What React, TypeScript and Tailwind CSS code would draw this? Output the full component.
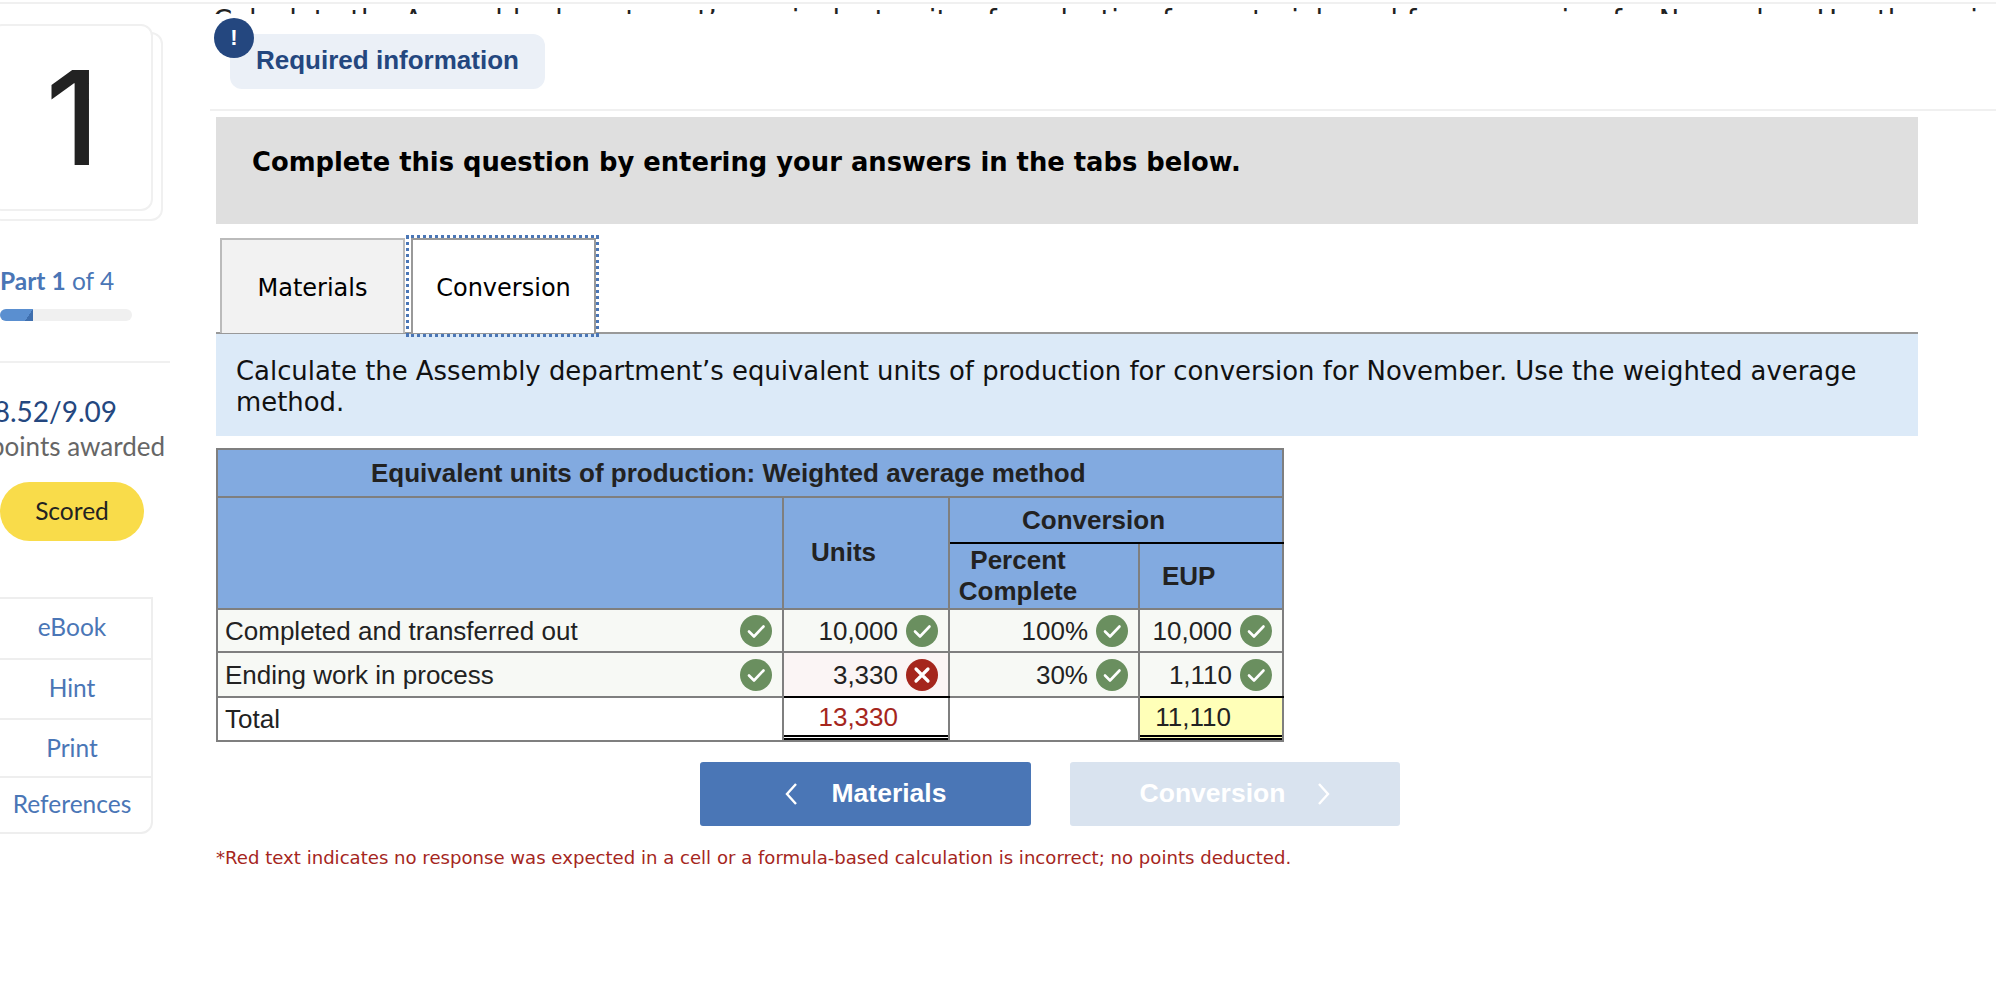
const dejavu = "font-['DejaVu_Sans',sans-serif]";
const lato = "font-['Lato',sans-serif]";

function Check() {
  return (
    <svg viewBox="0 0 32 32" className="h-8 w-8 shrink-0">
      <circle cx="16" cy="16" r="16" fill="#6a8f5f" />
      <path d="M9 16.5l5 5 9.5-10" fill="none" stroke="#fff" strokeWidth="2.6" strokeLinecap="round" strokeLinejoin="round" />
    </svg>
  );
}

function Cross() {
  return (
    <svg viewBox="0 0 32 32" className="h-8 w-8 shrink-0">
      <circle cx="16" cy="16" r="16" fill="#a5261d" />
      <path d="M10 10l12 12M22 10L10 22" fill="none" stroke="#fff" strokeWidth="3.2" strokeLinecap="round" />
    </svg>
  );
}

function Sidebar() {
  const links = [
    { label: 'eBook', height: 'h-[59px] pb-[2px]' },
    { label: 'Hint', height: 'h-[60px] pb-[2px]' },
    { label: 'Print', height: 'h-[58px]' },
    { label: 'References', height: 'h-[56px] pb-[2px]' },
  ];

  return (
    <aside className={`w-[210px] shrink-0 ${lato}`}>
      <div className="relative mt-5 -ml-[10px] h-[197px] w-[173px]">
        <div className="absolute inset-x-0 top-2 bottom-0 rounded-xl border-2 border-[#f0f0f0]" />
        <div className="relative flex h-[187px] w-[163px] items-center justify-center rounded-xl border-2 border-[#f0f0f0] bg-white pl-[2px]">
          <span className="font-['Inter',sans-serif] text-[130px] leading-none font-medium text-[#222]">1</span>
        </div>
      </div>
      <p className="mt-[46px] text-[24.5px] leading-7 text-[#4a76b6]">
        <b>Part 1</b> of 4
      </p>
      <div className="mt-[14px] h-3 w-[132px] rounded-full bg-[#f0f0f0]">
        <div className="flex h-full w-[33px] justify-end rounded-l-full bg-[#5a8fd0]">
          <div className="h-full w-2 bg-[linear-gradient(to_bottom_right,transparent_50%,#3f6fae_50%)]" />
        </div>
      </div>
      <div className="mt-10 h-[2px] w-[170px] bg-[#f0f0f0]" />
      <div className="mt-[31px] flex w-[117px] justify-end whitespace-nowrap text-[28px] leading-[34px] text-[#24477f]">
        8.52/9.09
      </div>
      <div className="mt-[3px] flex w-[165px] justify-end whitespace-nowrap text-[26px] leading-[30px] text-[#666]">
        points awarded
      </div>
      <div className="mt-[21px] flex h-[59px] w-36 items-center justify-center rounded-full bg-[#f9dc4a] text-[24.5px] text-[#222]">
        Scored
      </div>
      <div className="mt-14 -ml-1 w-[157px] rounded-br-xl border-2 border-[#eeeeee]">
        {links.map((link, idx) => (
          <div
            key={link.label}
            className={`flex ${link.height} items-center justify-center pr-[5px] text-[24.5px] text-[#4a76b6] ${idx > 0 ? 'border-t-2 border-[#eeeeee]' : ''}`}
          >
            {link.label}
          </div>
        ))}
      </div>
    </aside>
  );
}

function AnswerTable() {
  const head = 'bg-[#82aae0] border-2 border-[#7f7f7f] font-bold text-[#222] p-0';
  const cell = 'border-2 border-[#7f7f7f] p-0';
  const soft = 'bg-[#f7f9f5]';
  const value = 'flex items-center justify-end gap-2 pr-[10px] h-full';

  return (
    <table className="mt-3 w-[1066px] table-fixed border-collapse font-['Liberation_Sans',sans-serif] text-[26px] leading-[32px] text-[#222]">
      <colgroup>
        <col className="w-[566px]" />
        <col className="w-[166px]" />
        <col className="w-[190px]" />
        <col className="w-[144px]" />
      </colgroup>
      <tbody>
        <tr className="h-[48px]">
          <td colSpan={4} className={`${head} text-left pl-[153px]`}>
            Equivalent units of production: Weighted average method
          </td>
        </tr>
        <tr className="h-[46px]">
          <td rowSpan={2} className={head} />
          <td rowSpan={2} className={`${head} pb-[2px] pl-[27px] text-left`}>
            Units
          </td>
          <td colSpan={2} className={`${head} border-b-black pl-[72px] text-left`}>
            Conversion
          </td>
        </tr>
        <tr className="h-[66px]">
          <td className={`${head} border-t-black pr-[52px] text-center leading-[31px]`}>
            Percent
            <br />
            Complete
          </td>
          <td className={`${head} border-t-black pl-[22px] text-left`}>EUP</td>
        </tr>
        <tr className="h-[43px]">
          <td className={`${cell} ${soft}`}>
            <div className="flex h-full items-center justify-between pr-[10px] pl-[7px]">
              Completed and transferred out
              <Check />
            </div>
          </td>
          <td className={`${cell} ${soft}`}>
            <div className={value}>
              10,000
              <Check />
            </div>
          </td>
          <td className={`${cell} ${soft}`}>
            <div className={value}>
              100%
              <Check />
            </div>
          </td>
          <td className={`${cell} ${soft}`}>
            <div className={value}>
              10,000
              <Check />
            </div>
          </td>
        </tr>
        <tr className="h-[45px]">
          <td className={`${cell} ${soft}`}>
            <div className="flex h-full items-center justify-between pr-[10px] pl-[7px]">
              Ending work in process
              <Check />
            </div>
          </td>
          <td className={`${cell} border-b-black bg-[#fbf5f5]`}>
            <div className={value}>
              3,330
              <Cross />
            </div>
          </td>
          <td className={`${cell} ${soft}`}>
            <div className={value}>
              30%
              <Check />
            </div>
          </td>
          <td className={`${cell} border-b-black ${soft}`}>
            <div className={value}>
              1,110
              <Check />
            </div>
          </td>
        </tr>
        <tr className="h-[43px]">
          <td className={`${cell} pl-[7px]`}>Total</td>
          <td className={cell}>
            <div className="flex h-[42px] items-center justify-end border-b-[5px] border-double border-black pr-[50px] text-[#a5261d]">
              13,330
            </div>
          </td>
          <td className={cell} />
          <td className={`${cell} bg-[#ffffb8]`}>
            <div className="flex h-[42px] items-center justify-end border-b-[5px] border-double border-black pr-[51px]">
              11,110
            </div>
          </td>
        </tr>
      </tbody>
    </table>
  );
}

function App() {
  return (
    <div className="h-[1000px] w-[1996px] overflow-hidden bg-white">
      <div className="mt-[2px] h-[2px] w-full bg-[#f0f0f0]" />
      <div className="flex">
        <Sidebar />
        <main className="w-[1786px]">
          <div className={`h-[10px] overflow-hidden pt-px pl-[3px] text-[27.5px] leading-[30px] whitespace-nowrap text-[#222] ${dejavu}`}>
            Calculate the Assembly department’s equivalent units of production for materials and for conversion for November. Use the weighted
          </div>
          <div className="relative mt-5 ml-5 flex h-[55px] w-[315px] items-center rounded-xl bg-[#ebf0f7] pb-[2px] pl-[26px] font-['Liberation_Sans',sans-serif] text-[26px] font-bold text-[#24477f]">
            <div className="absolute -top-4 -left-4 flex h-10 w-10 items-center justify-center rounded-full bg-[#24477f] text-[22px] leading-none text-white">
              !
            </div>
            Required information
          </div>
          <div className="mt-5 h-[2px] bg-[#f0f0f0]" />
          <div className={`ml-[6px] w-[1702px] ${dejavu}`}>
            <div className="mt-[6px] h-[107px] bg-[#dfdfdf] pt-[27px] pl-9 text-[25.8px] leading-9 font-bold text-black">
              Complete this question by entering your answers in the tabs below.
            </div>
            <div className="mt-[14px] flex h-24 gap-[6px] border-b-2 border-[#999] pl-1 text-2xl text-black">
              <div className="flex h-[95px] w-[185px] items-center justify-center border-x-2 border-t-2 border-[#bbb] bg-[#f2f2f2] pt-[2px]">
                Materials
              </div>
              <div className="relative z-10 flex h-[95px] w-[185px] items-center justify-center border-x-2 border-t-2 border-[#999] bg-white pt-[2px]">
                Conversion
                <div className="absolute -top-[5px] -right-[5px] -bottom-[4px] -left-[7px] border-3 border-dotted border-[#4a76b6]" />
              </div>
            </div>
            <div className="h-[102px] bg-[#dceaf8] px-5 pt-[22px] text-[25.9px] leading-[31px] text-[#111]">
              Calculate the Assembly department’s equivalent units of production for conversion for November. Use the weighted average method.
            </div>
            <AnswerTable />
            <div className="mt-5 ml-[484px] flex gap-[39px] font-['Liberation_Sans',sans-serif] text-[26.5px] font-bold text-white">
              <button className="flex h-16 w-[331px] items-center justify-center gap-[35px] rounded-[3px] bg-[#4a76b6]">
                <svg viewBox="0 0 12 22" className="h-[22px] w-3" fill="none" stroke="#fff" strokeWidth="2.4">
                  <path d="M11 1L2 11l9 10" />
                </svg>
                Materials
              </button>
              <button className="flex h-16 w-[330px] items-center justify-center gap-[33px] rounded-[3px] bg-[#d9e3ef]">
                Conversion
                <svg viewBox="0 0 12 22" className="h-[22px] w-3" fill="none" stroke="#fff" strokeWidth="2.4">
                  <path d="M1 1l9 10-9 10" />
                </svg>
              </button>
            </div>
            <p className="mt-5 text-[18.1px] leading-6 text-[#a5261d]">
              *Red text indicates no response was expected in a cell or a formula-based calculation is incorrect; no points deducted.
            </p>
          </div>
        </main>
      </div>
    </div>
  );
}

export default App;
